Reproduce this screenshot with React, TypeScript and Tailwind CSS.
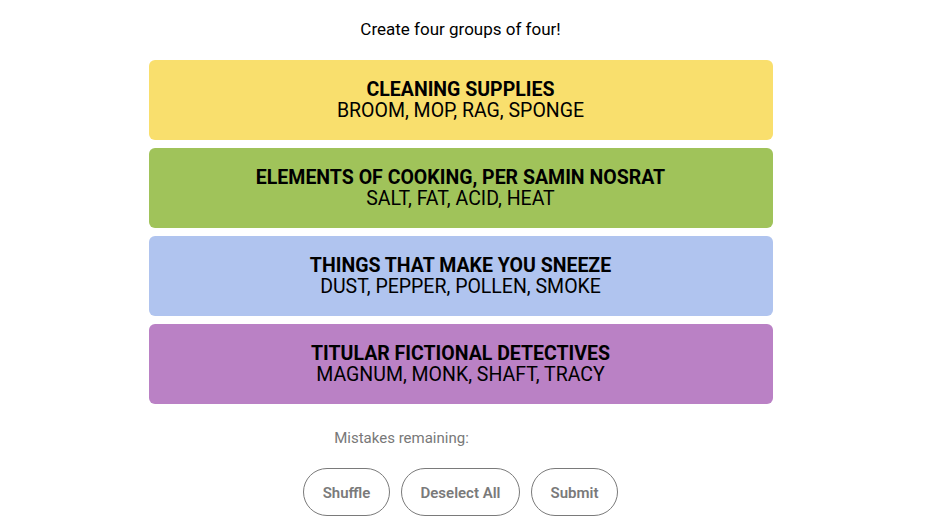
const groups = [
  { title: 'CLEANING SUPPLIES', words: 'BROOM, MOP, RAG, SPONGE', color: 'bg-[#f9df6d]' },
  { title: 'ELEMENTS OF COOKING, PER SAMIN NOSRAT', words: 'SALT, FAT, ACID, HEAT', color: 'bg-[#a0c35a]' },
  { title: 'THINGS THAT MAKE YOU SNEEZE', words: 'DUST, PEPPER, POLLEN, SMOKE', color: 'bg-[#b0c4ef]' },
  { title: 'TITULAR FICTIONAL DETECTIVES', words: 'MAGNUM, MONK, SHAFT, TRACY', color: 'bg-[#ba81c5]' },
];

const actions = [
  { label: 'Shuffle', width: 'w-[87px]' },
  { label: 'Deselect All', width: 'w-[119px]' },
  { label: 'Submit', width: 'w-[87px]' },
];

const App = () => {
  return (
    <div className="w-[921px] bg-white font-['Roboto',sans-serif] text-black">
      <div className="mx-auto flex w-[624px] flex-col items-center pt-[18px]">
        <p className="text-[17px] leading-[22px]">Create four groups of four!</p>
        <div className="mt-[20px] flex w-full flex-col gap-2">
          {groups.map((g) => (
            <div
              key={g.title}
              className={`flex h-20 flex-col items-center justify-center rounded-md ${g.color}`}
            >
              <h3 className="text-[19.5px] font-bold leading-[21px]">{g.title}</h3>
              <p className="text-[19.5px] leading-[21px]">{g.words}</p>
            </div>
          ))}
        </div>
        <div className="mt-[23px] flex items-center justify-center gap-2 text-[15px] text-[#787878]">
          <span>Mistakes remaining:</span>
          <div className="w-[110px]" />
        </div>
        <div className="mt-[18px] flex gap-[11px]">
          {actions.map((a) => (
            <button
              key={a.label}
              className={`h-12 ${a.width} rounded-full border border-[#7a7a7a] pt-[3px] text-[15px] font-semibold text-[#7a7a7a]`}
            >
              {a.label}
            </button>
          ))}
        </div>
      </div>
    </div>
  );
};

export default App;
